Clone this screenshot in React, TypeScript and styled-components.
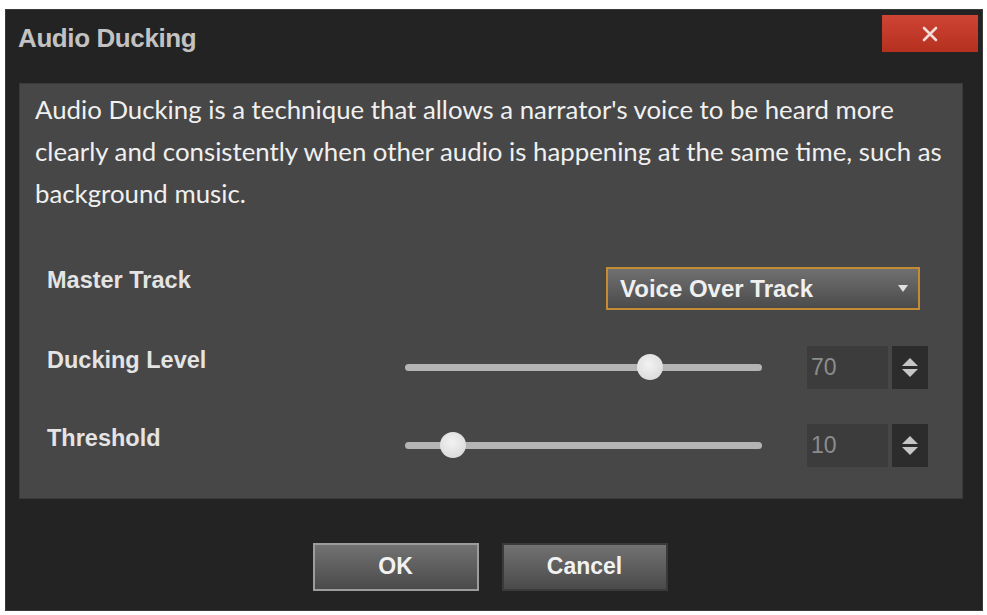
import styled, { createGlobalStyle } from "styled-components";
import { useState } from "react";

const GlobalStyle = createGlobalStyle`
  html, body {
    margin: 0;
    padding: 0;
    background: #ffffff;
  }
`;

const Page = styled.div`
  width: 987px;
  height: 615px;
  box-sizing: border-box;
  padding: 9px 4px 4px 5px;
`;

const Window = styled.div`
  height: 100%;
  box-sizing: border-box;
  display: flex;
  flex-direction: column;
  background: #232323;
  border: 1px solid #3a3a3a;
  font-family: "Liberation Sans", Arial, sans-serif;
`;

const TitleBar = styled.div`
  height: 68px;
  display: flex;
  align-items: flex-start;
  justify-content: space-between;
  padding: 5px 4px 0 12px;
`;

const Title = styled.div`
  margin-top: 8px;
  font-size: 26px;
  font-weight: 700;
  color: #c2c2c2;
  letter-spacing: -0.4px;
`;

const CloseButton = styled.button`
  width: 96px;
  height: 37px;
  border: 0;
  background: linear-gradient(#cf4434, #b5301f);
  display: flex;
  align-items: center;
  justify-content: center;
  cursor: pointer;
`;

const Panel = styled.div`
  margin: 0 19px 0 13px;
  height: 416px;
  box-sizing: border-box;
  background: #474747;
  border: 1px solid #3b3b3b;
  padding: 4px 34px 0 0;
  display: flex;
  flex-direction: column;
`;

const Description = styled.p`
  margin: 0 -28px 53px 15px;
  font-family: Lato, "Noto Sans", sans-serif;
  font-size: 25.8px;
  line-height: 42px;
  color: #f0f0f0;
`;

const Row = styled.div<{ $gap?: number }>`
  display: flex;
  align-items: center;
  padding-left: 27px;
  margin-bottom: ${(p) => p.$gap ?? 0}px;
`;

const Label = styled.div<{ $offset?: number }>`
  width: 358px;
  align-self: flex-start;
  margin-top: ${(p) => p.$offset ?? 2}px;
  font-size: 23.5px;
  font-weight: 700;
  color: #e4e4e4;
`;

const Select = styled.div`
  margin-left: auto;
  margin-right: 8px;
  width: 314px;
  height: 43px;
  box-sizing: border-box;
  border: 2px solid #c48a34;
  background: linear-gradient(#707070, #4b4b4b);
  display: flex;
  align-items: center;
  justify-content: space-between;
  padding: 0 10px 0 12px;
  font-size: 24px;
  font-weight: 700;
  color: #f0f0f0;
`;

const Caret = styled.span`
  width: 0;
  height: 0;
  border-left: 5px solid transparent;
  border-right: 5px solid transparent;
  border-top: 7px solid #e0e0e0;
`;

const Track = styled.div`
  position: relative;
  width: 357px;
  height: 44px;
  display: flex;
  align-items: center;
  cursor: pointer;

  &::before {
    content: "";
    width: 100%;
    height: 7px;
    border-radius: 4px;
    background: #b4b4b4;
  }
`;

const Thumb = styled.span`
  position: absolute;
  top: 50%;
  width: 26px;
  height: 26px;
  margin: -13px 0 0 -13px;
  border-radius: 50%;
  background: radial-gradient(circle at 45% 40%, #f2f2f2, #d4d4d4);
`;

const NumberBox = styled.div`
  margin-left: 45px;
  width: 81px;
  height: 43px;
  box-sizing: border-box;
  background: #3c3c3c;
  display: flex;
  align-items: center;
  padding-left: 4px;
  font-size: 23px;
  color: #8c8c8c;
`;

const Spinner = styled.div`
  margin-left: 4px;
  width: 36px;
  height: 43px;
  background: #2c2c2c;
  display: flex;
  flex-direction: column;
  align-items: center;
  justify-content: center;
  gap: 3px;
`;

const Arrow = styled.span<{ $up?: boolean }>`
  width: 0;
  height: 0;
  border-left: 8px solid transparent;
  border-right: 8px solid transparent;
  ${(p) => (p.$up ? "border-bottom" : "border-top")}: 8px solid #c6c6c6;
`;

const Footer = styled.div`
  flex: 1;
  display: flex;
  align-items: center;
  justify-content: center;
  gap: 23px;
  padding: 24px 8px 0 0;
`;

const Button = styled.button<{ $primary?: boolean }>`
  width: 166px;
  height: 48px;
  box-sizing: border-box;
  border: 2px solid ${(p) => (p.$primary ? "#9c9c9c" : "#3a3a3a")};
  background: linear-gradient(#727272, #4a4a4a);
  font-family: "Liberation Sans", Arial, sans-serif;
  font-size: 23px;
  font-weight: 700;
  color: #f2f2f2;
  cursor: pointer;
`;

type SliderRowProps = {
  label: string;
  value: number;
  gap?: number;
};

function SliderRow({ label, value, gap }: SliderRowProps) {
  // thumb position as a share of the track, 0-100 range
  const pct = 4.2 + value * 0.92;
  return (
    <Row $gap={gap}>
      <Label>{label}</Label>
      <Track>
        <Thumb style={{ left: `${pct}%` }} />
      </Track>
      <NumberBox>{value}</NumberBox>
      <Spinner>
        <Arrow $up />
        <Arrow />
      </Spinner>
    </Row>
  );
}

function App() {
  const [track] = useState("Voice Over Track");

  return (
    <Page>
      <GlobalStyle />
      <Window>
        <TitleBar>
          <Title>Audio Ducking</Title>
          <CloseButton aria-label="Close">
            <svg width="16" height="16" viewBox="0 0 16 16">
              <path
                d="M2 2 L14 14 M14 2 L2 14"
                stroke="#f4dcd8"
                strokeWidth="2.6"
                strokeLinecap="round"
              />
            </svg>
          </CloseButton>
        </TitleBar>

        <Panel>
          <Description>
            Audio Ducking is a technique that allows a narrator's voice to be
            heard more clearly and consistently when other audio is happening
            at the same time, such as background music.
          </Description>

          <Row $gap={35}>
            <Label $offset={0}>Master Track</Label>
            <Select>
              {track}
              <Caret />
            </Select>
          </Row>

          <SliderRow label="Ducking Level" value={70} gap={34} />
          <SliderRow label="Threshold" value={10} />
        </Panel>

        <Footer>
          <Button $primary>OK</Button>
          <Button>Cancel</Button>
        </Footer>
      </Window>
    </Page>
  );
}

export default App;
